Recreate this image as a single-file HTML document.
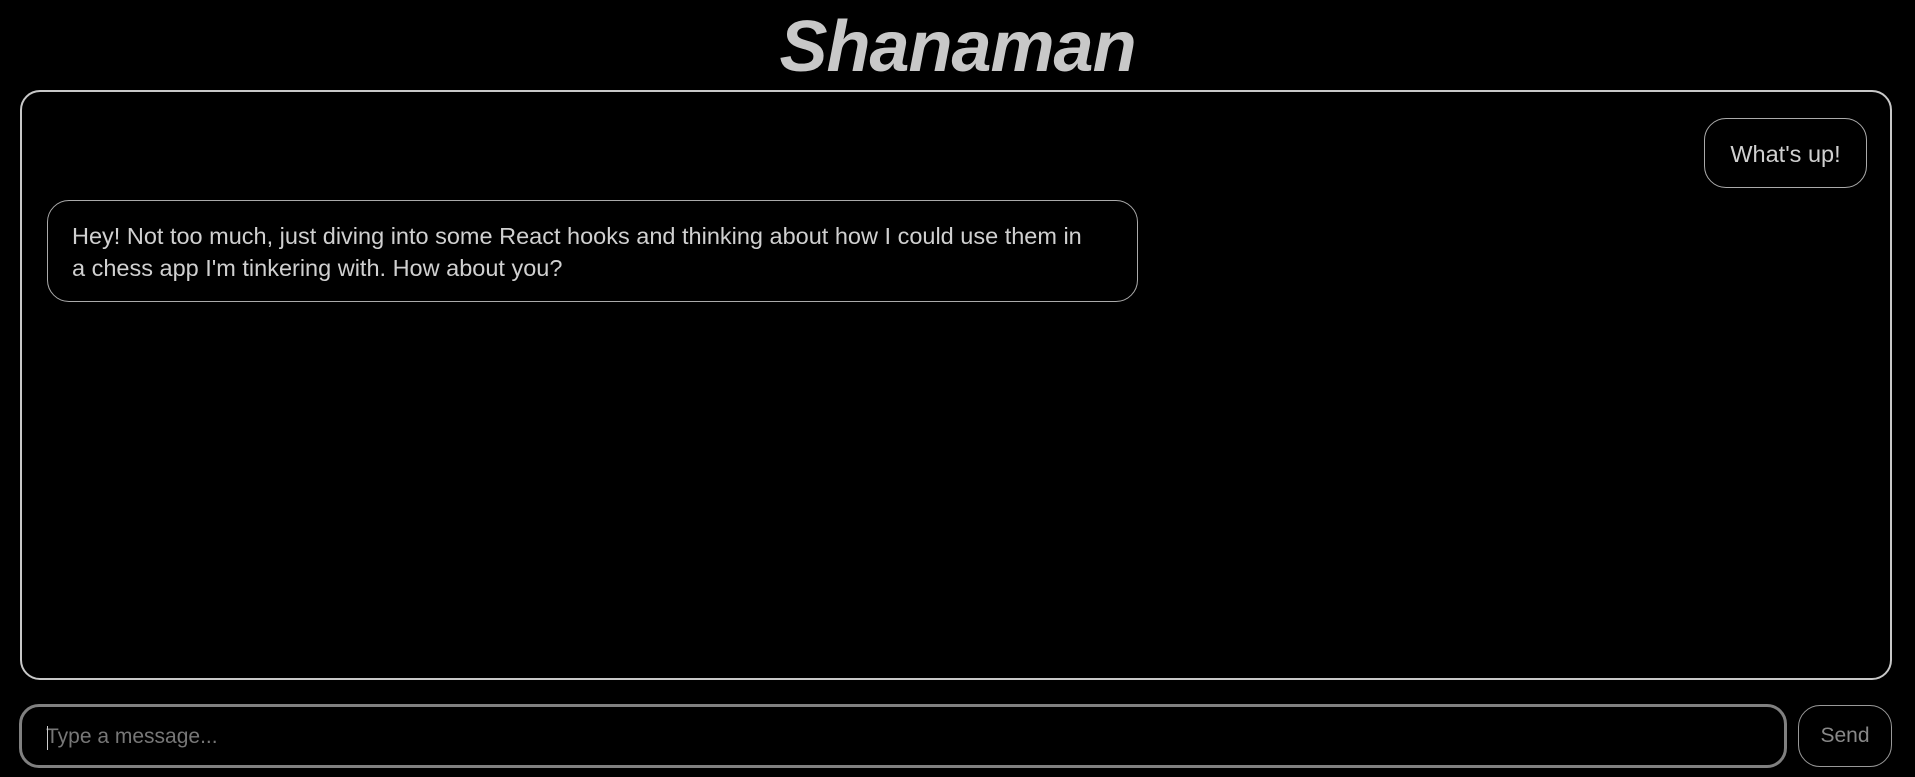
<!DOCTYPE html>
<html><head><meta charset="utf-8"><style>
html,body{margin:0;padding:0;background:#000;width:1915px;height:777px;overflow:hidden;font-family:"Liberation Sans",sans-serif;color:#d0d0d0}
h1{position:absolute;left:0;width:1915px;top:6px;margin:0;text-align:center;font-size:72px;font-weight:bold;font-style:italic;color:#c8c8c8;letter-spacing:-1px}
.box{position:absolute;left:20px;top:90px;width:1868px;height:586px;border:2px solid #c8c8c8;border-radius:20px}
.b{position:absolute;border:1px solid #aaa;border-radius:22px;font-size:23.5px;line-height:32px;box-sizing:border-box}
.u{left:1682px;top:26px;width:163px;height:70px;text-align:center;padding-top:19px}
.a{left:25px;top:108px;width:1091px;height:102px;padding:19px 40px 15px 24px}
.in{position:absolute;left:19px;top:704px;width:1768px;height:64px;box-sizing:border-box;border:3px solid #808080;border-radius:20px;font-size:21px;color:#777;padding:18px 0 0 24px}
.in:before{content:"";position:absolute;left:25px;top:19px;width:1px;height:24px;background:#ccc}
.s{position:absolute;left:1798px;top:705px;width:94px;height:62px;box-sizing:border-box;border:1px solid #999;border-radius:22px;text-align:center;font-size:21px;color:#888;line-height:60px}
</style></head><body>
<h1>Shanaman</h1>
<div class="box">
<div class="b u">What's up!</div>
<div class="b a">Hey! Not too much, just diving into some React hooks and thinking about how I could use them in a chess app I'm tinkering with. How about you?</div>
</div>
<div class="in">Type a message...</div>
<div class="s">Send</div>
</body></html>
